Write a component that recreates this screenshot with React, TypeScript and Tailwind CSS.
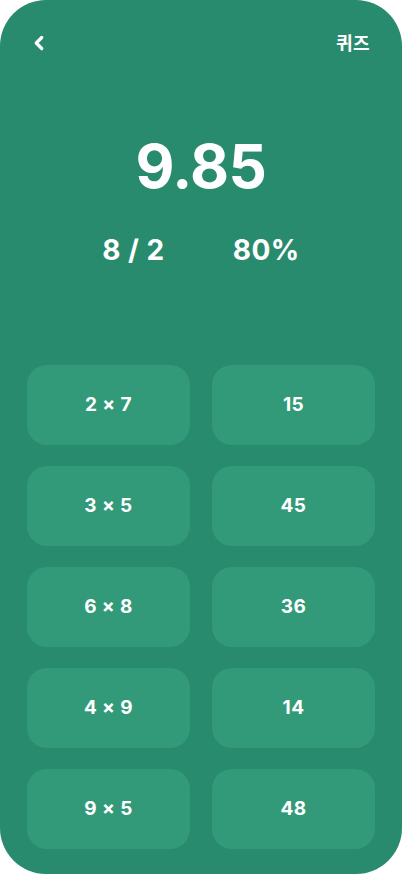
import { ChevronLeft } from "lucide-react";

const PAIRS: [string, string][] = [
  ["2 × 7", "15"],
  ["3 × 5", "45"],
  ["6 × 8", "36"],
  ["4 × 9", "14"],
  ["9 × 5", "48"],
];

export default function App() {
  return (
    <div className="w-[402px] h-[874px] bg-white" style={{ fontFamily: "Inter, 'Noto Sans CJK KR', sans-serif" }}>
      <div className="w-full h-full rounded-[46px] bg-[#288b6d] text-white flex flex-col">
        <div className="flex items-center justify-between pl-[28px] pr-[32px] pt-[30px] h-[56px]">
          <ChevronLeft size={22} strokeWidth={3.5} />
          <span className="text-[18px] font-bold tracking-[0.5px]">퀴즈</span>
        </div>

        <div className="flex flex-col items-center mt-[80px]">
          <div className="text-[60px] leading-[60px] font-bold tracking-[-0.5px]">9.85</div>
          <div className="flex justify-center gap-[68px] mt-[38px] text-[28px] leading-[32px] font-bold tracking-[0.5px]">
            <span>8 / 2</span>
            <span>80%</span>
          </div>
        </div>

        <div className="grid grid-cols-2 gap-x-[22px] gap-y-[21px] px-[27px] mt-[99px]">
          {PAIRS.map(([q, a]) => (
            <>
              <div key={q} className="h-[80px] rounded-[20px] bg-[#329a79] flex items-center justify-center text-[19px] font-bold tracking-[0.4px]">
                {q}
              </div>
              <div key={q + a} className="h-[80px] rounded-[20px] bg-[#329a79] flex items-center justify-center text-[19px] font-bold tracking-[0.4px]">
                {a}
              </div>
            </>
          ))}
        </div>
      </div>
    </div>
  );
}
